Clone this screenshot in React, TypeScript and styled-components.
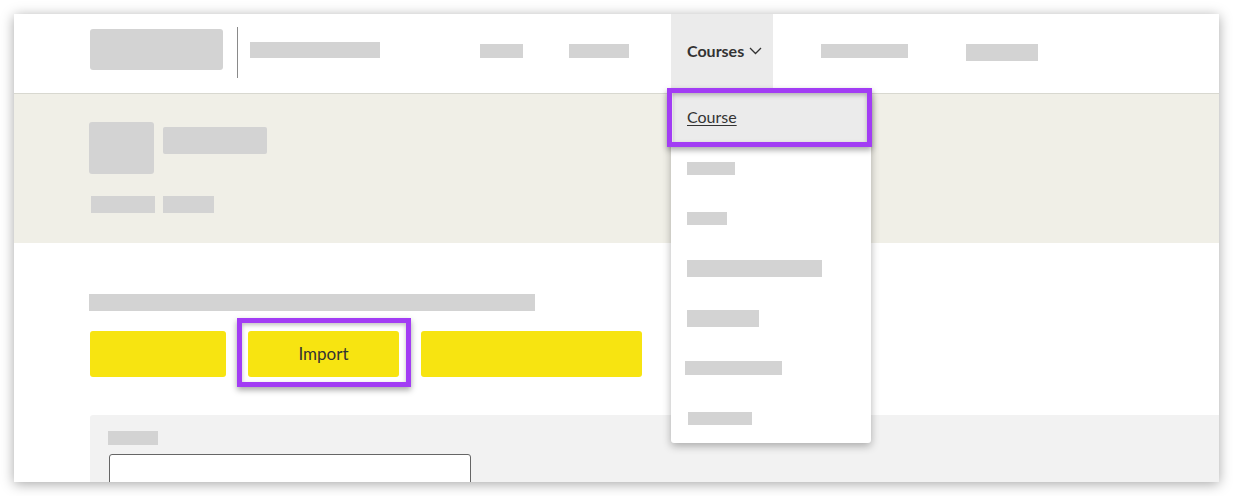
import React from "react"
import styled, { createGlobalStyle } from "styled-components"

const GlobalStyle = createGlobalStyle`
  body {
    margin: 0;
    background: #ffffff;
    font-family: Lato, "Open Sans", "Liberation Sans", sans-serif;
    color: #333333;
  }
`

const Frame = styled.div`
  position: relative;
  width: 1205px;
  height: 468px;
  margin: 14px;
  background: #ffffff;
  overflow: hidden;
  box-shadow: 0 2px 12px rgba(0, 0, 0, 0.35);
`

const Block = styled.div<{ $w: number; $h: number; $r?: number; $ml?: number; $mt?: number }>`
  flex: none;
  width: ${(p) => p.$w}px;
  height: ${(p) => p.$h}px;
  margin-left: ${(p) => p.$ml ?? 0}px;
  margin-top: ${(p) => p.$mt ?? 0}px;
  background: #d3d3d3;
  border-radius: ${(p) => p.$r ?? 0}px;
`

/* header */
const Header = styled.header`
  display: flex;
  align-items: flex-start;
  height: 79px;
  padding-left: 76px;
  border-bottom: 1px solid #d8d8d0;
`
const Divider = styled.div`
  width: 1px;
  height: 51px;
  margin: 13px 12px 0 14px;
  background: #8a8a8a;
`
const Nav = styled.nav`
  display: flex;
  align-items: flex-start;
  height: 100%;
  margin-left: 100px;
`
const NavItem = styled.div<{ $ml: number }>`
  padding-top: 30px;
  margin-left: ${(p) => p.$ml}px;
`
const NavTab = styled.div<{ $ml: number }>`
  position: relative;
  display: flex;
  align-items: center;
  gap: 5px;
  box-sizing: border-box;
  width: 102px;
  height: 100%;
  margin-left: ${(p) => p.$ml}px;
  padding: 0 0 6px 16px;
  background: #ebebeb;
  font-size: 16px;
  font-weight: 700;
  color: #333333;
`

/* dropdown */
const Menu = styled.div`
  position: absolute;
  left: 657px;
  top: 79px;
  z-index: 5;
  width: 200px;
  background: #ffffff;
  border-radius: 0 0 3px 3px;
  box-shadow: 0 3px 9px rgba(0, 0, 0, 0.3);
`
const MenuRow = styled.div`
  display: flex;
  align-items: center;
  height: 50px;
  padding-left: 16px;
`
const MenuActive = styled.a`
  position: relative;
  display: flex;
  align-items: center;
  height: 49px;
  margin: 0 4px 1px 2px;
  padding: 0 0 2px 14px;
  box-sizing: border-box;
  background: #ebebeb;
  font-size: 16px;
  color: #333333;
  text-decoration: underline;
  text-underline-offset: 2px;

  &::after {
    content: "";
    position: absolute;
    inset: -5px -5px -5px -6px;
    border: 5px solid #a23cf4;
    box-shadow: 0 3px 6px rgba(0, 0, 0, 0.35), inset 0 2px 4px rgba(0, 0, 0, 0.25);
  }
`

/* hero */
const Hero = styled.section`
  height: 149px;
  padding-left: 75px;
  background: #f0efe7;
  box-sizing: border-box;
  padding-top: 28px;
`
const HeroTop = styled.div`
  display: flex;
  align-items: flex-start;
`
const Chips = styled.div`
  display: flex;
  gap: 8px;
  margin: 22px 0 0 2px;
`

/* main */
const Main = styled.main`
  padding: 51px 0 0 75px;
`
const ButtonRow = styled.div`
  display: flex;
  gap: 22px;
  margin: 20px 0 0 1px;
`
const Button = styled.button<{ $w: number; $marked?: boolean }>`
  position: relative;
  width: ${(p) => p.$w}px;
  height: 46px;
  padding: 0 0 2px;
  border: none;
  border-radius: 3px;
  background: #f7e411;
  font-family: inherit;
  font-size: 17px;
  color: #333333;

  ${(p) =>
    p.$marked &&
    `
    &::after {
      content: "";
      position: absolute;
      inset: -13px -12px -10px -11px;
      border: 5px solid #a23cf4;
      box-shadow: 0 3px 6px rgba(0, 0, 0, 0.35), inset 0 2px 4px rgba(0, 0, 0, 0.25);
    }
  `}
`
const Panel = styled.div`
  margin: 38px 0 0 1px;
  padding: 16px 0 0 18px;
  height: 120px;
  background: #f2f2f2;
  border-radius: 3px 0 0 0;
`
const Input = styled.div`
  width: 360px;
  height: 40px;
  margin: 9px 0 0 1px;
  background: #ffffff;
  border: 1px solid #666666;
  border-radius: 3px;
`

const Chevron = () => (
  <svg width="13" height="8" viewBox="0 0 13 8" fill="none">
    <polyline points="1,1 6.5,6.5 12,1" stroke="#333" strokeWidth="1.3" />
  </svg>
)

const menuRows = [
  { w: 48, h: 13 },
  { w: 40, h: 13 },
  { w: 135, h: 17 },
  { w: 72, h: 17 },
  { w: 97, h: 14, ml: -2 },
  { w: 64, h: 13, ml: 1 },
]

export default function App() {
  return (
    <>
      <GlobalStyle />
      <Frame>
        <Header>
          <Block $w={133} $h={41} $r={3} $mt={15} />
          <Divider />
          <Block $w={130} $h={16} $mt={28} />
          <Nav>
            <NavItem $ml={0}>
              <Block $w={43} $h={14} />
            </NavItem>
            <NavItem $ml={46}>
              <Block $w={60} $h={14} />
            </NavItem>
            <NavTab $ml={42}>
              Courses
              <Chevron />
            </NavTab>
            <NavItem $ml={48}>
              <Block $w={87} $h={14} />
            </NavItem>
            <NavItem $ml={58}>
              <Block $w={72} $h={17} />
            </NavItem>
          </Nav>
        </Header>

        <Menu>
          <MenuActive>Course</MenuActive>
          {menuRows.map((r, i) => (
            <MenuRow key={i}>
              <Block $w={r.w} $h={r.h} $ml={r.ml} />
            </MenuRow>
          ))}
        </Menu>

        <Hero>
          <HeroTop>
            <Block $w={65} $h={52} $r={3} />
            <Block $w={104} $h={27} $r={2} $ml={9} $mt={5} />
          </HeroTop>
          <Chips>
            <Block $w={64} $h={17} />
            <Block $w={51} $h={17} />
          </Chips>
        </Hero>

        <Main>
          <Block $w={446} $h={17} />
          <ButtonRow>
            <Button $w={136} />
            <Button $w={151} $marked>
              Import
            </Button>
            <Button $w={221} />
          </ButtonRow>
          <Panel>
            <Block $w={50} $h={14} />
            <Input />
          </Panel>
        </Main>
      </Frame>
    </>
  )
}
